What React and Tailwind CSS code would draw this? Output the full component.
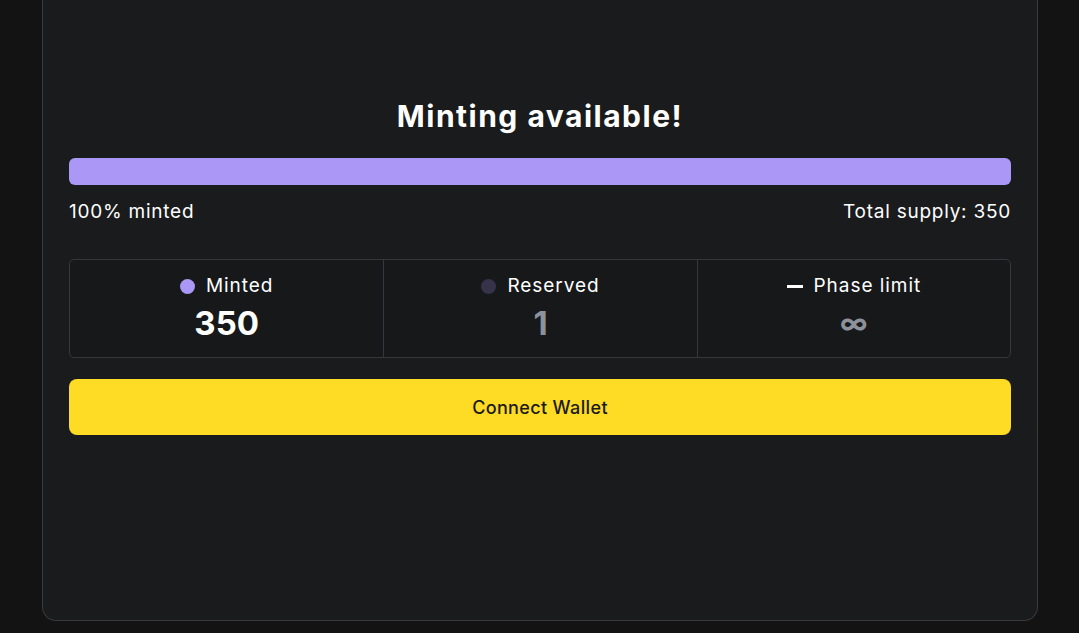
const stats = [
  { label: "Minted", value: "350", marker: "dot", dot: "bg-[#ab98f6]", valueCls: "text-white text-[33px]" },
  { label: "Reserved", value: "1", marker: "dot", dot: "bg-[#35324a]", valueCls: "text-[#8d919b] text-[33px]" },
  { label: "Phase limit", value: "∞", marker: "dash", valueCls: "text-[#8d919b] text-[28px]" },
];

export default function App() {
  return (
    <div
      className="h-[633px] w-[1079px] bg-[#131313] pl-[42px] pr-[41px] overflow-hidden"
      style={{ fontFamily: "Inter, 'Noto Sans', sans-serif" }}
    >
      <div className="h-[621px] bg-[#1a1b1d] border-x border-b border-[#3a3b3e] rounded-b-[14px] px-[26px] pt-[96px]">
        <h1 className="text-center text-white text-[30px] font-bold leading-[40px] tracking-[0.05em]">
          Minting available!
        </h1>

        <div className="mt-[22px] h-[27px] rounded-[6px] bg-[#ab98f6]" />
        <div className="mt-[14px] flex justify-between text-[19px] leading-[26px] text-white tracking-[0.04em]">
          <span>100% minted</span>
          <span>Total supply: 350</span>
        </div>

        <div className="mt-[34px] grid grid-cols-3 h-[99px] rounded-[5px] border border-[#36373a] bg-[#17181a]">
          {stats.map((s, i) => (
            <div
              key={s.label}
              className={`flex flex-col items-center pt-[13px] ${i > 0 ? "border-l border-[#36373a]" : ""}`}
            >
              <div className="flex items-center gap-[11px] text-[19px] leading-[26px] text-white tracking-[0.05em]">
                {s.marker === "dot" ? (
                  <span className={`w-[15px] h-[15px] rounded-full ${s.dot}`} />
                ) : (
                  <span className="w-[16px] h-[3px] bg-white" />
                )}
                <span>{s.label}</span>
              </div>
              <div className={`mt-[2px] h-[44px] flex items-center font-bold leading-[44px] ${s.valueCls}`}>
                {s.value}
              </div>
            </div>
          ))}
        </div>

        <button className="mt-[21px] w-full h-[56px] rounded-[8px] bg-[#fedb24] text-[#1a1a1a] text-[18px] font-medium tracking-[0.02em]">
          Connect Wallet
        </button>
      </div>
    </div>
  );
}
